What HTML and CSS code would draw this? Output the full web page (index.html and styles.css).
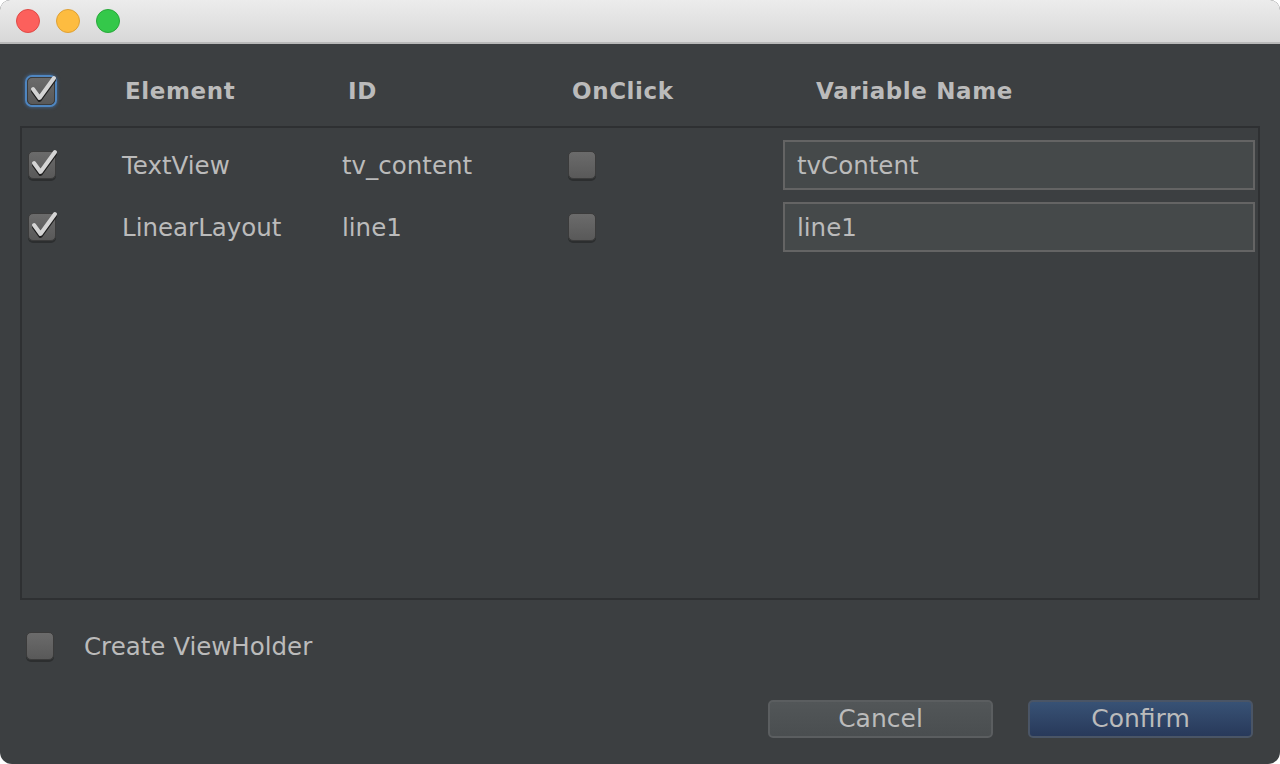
FILE: index.html
```html
<!DOCTYPE html>
<html>
<head>
<meta charset="utf-8">
<link rel="stylesheet" href="styles.css">
</head>
<body>
<div class="window">
  <div class="titlebar">
    <span class="light red"></span>
    <span class="light yellow"></span>
    <span class="light green"></span>
  </div>
  <div class="content">
    <div class="header">
      <span class="cb checked focus"><svg class="tick" viewBox="0 0 28 28"><path class="tick-shadow" d="M6 14 L12.5 23 L27 3"/><path class="tick-mark" d="M6 12 L12.5 21 L27 1"/></svg></span>
      <span class="hcell">Element</span>
      <span class="hcell">ID</span>
      <span class="hcell">OnClick</span>
      <span class="hcell">Variable Name</span>
    </div>
    <div class="table">
      <div class="row">
        <span class="cb checked"><svg class="tick" viewBox="0 0 28 28"><path class="tick-shadow" d="M6 14 L12.5 23 L27 3"/><path class="tick-mark" d="M6 12 L12.5 21 L27 1"/></svg></span>
        <span class="cell">TextView</span>
        <span class="cell">tv_content</span>
        <span class="cb"></span>
        <span class="field">tvContent</span>
      </div>
      <div class="row">
        <span class="cb checked"><svg class="tick" viewBox="0 0 28 28"><path class="tick-shadow" d="M6 14 L12.5 23 L27 3"/><path class="tick-mark" d="M6 12 L12.5 21 L27 1"/></svg></span>
        <span class="cell">LinearLayout</span>
        <span class="cell">line1</span>
        <span class="cb"></span>
        <span class="field">line1</span>
      </div>
    </div>
    <div class="option">
      <span class="cb"></span>
      <span class="option-label">Create ViewHolder</span>
    </div>
    <div class="buttons">
      <button class="btn cancel">Cancel</button>
      <button class="btn confirm">Confirm</button>
    </div>
  </div>
</div>
</body>
</html>
```

FILE: styles.css
```css
html, body {
  margin: 0;
  padding: 0;
  background: #ffffff;
}
body {
  width: 1280px;
  height: 764px;
  overflow: hidden;
  font-family: "DejaVu Sans", "Liberation Sans", sans-serif;
  color: #bbbbbb;
}
.window {
  width: 1280px;
  height: 764px;
  border-radius: 10px 10px 12px 12px;
  overflow: hidden;
  display: flex;
  flex-direction: column;
  background: #3c3f41;
}
.titlebar {
  flex: none;
  height: 44px;
  box-sizing: border-box;
  background: linear-gradient(#ececec, #d8d8d8);
  border-bottom: 2px solid #b9b9b9;
  display: flex;
  align-items: center;
  padding-left: 16px;
  gap: 16px;
}
.light {
  width: 24px;
  height: 24px;
  border-radius: 50%;
  box-sizing: border-box;
}
.red { background: #fc605c; border: 1px solid #df4a46; }
.yellow { background: #fdbc40; border: 1px solid #dea035; }
.green { background: #34c84a; border: 1px solid #28a83a; }

.content {
  flex: 1;
  display: flex;
  flex-direction: column;
}
.header {
  height: 82px;
  box-sizing: border-box;
  padding: 12px 0 0 27px;
  display: grid;
  grid-template-columns: 98px 223px 224px 244px 1fr;
  align-items: center;
}
.hcell {
  font-weight: bold;
  font-size: 23px;
  letter-spacing: 0.6px;
  color: #bbbbbb;
}
.table {
  margin: 0 20px;
  height: 474px;
  border: 2px solid #2e3032;
  box-sizing: border-box;
  padding: 12px 3px 0 6px;
  display: flex;
  flex-direction: column;
  gap: 12px;
}
.row {
  height: 50px;
  display: grid;
  grid-template-columns: 94px 220px 226px 215px 1fr;
  align-items: center;
}
.cell {
  font-size: 24.5px;
}
.cb {
  position: relative;
  display: block;
  width: 28px;
  height: 28px;
  box-sizing: border-box;
  border-radius: 5px;
  background: linear-gradient(#6b6b6b, #595959);
  border: 1px solid #3b3b3b;
  box-shadow: 0 2px 0 #2c2e2f;
}
.cb.focus {
  box-shadow: 0 0 0 2px #4f86c0, 0 0 3px 3px rgba(70,120,180,0.5);
}
.tick {
  position: absolute;
  left: -1px;
  top: -1px;
  width: 28px;
  height: 28px;
  overflow: visible;
}
.tick path {
  fill: none;
  stroke-width: 4px;
  stroke-linecap: round;
  stroke-linejoin: round;
}
.tick-shadow { stroke: #1e1e1e; }
.tick-mark { stroke: #d4d4d4; }
.field {
  height: 50px;
  box-sizing: border-box;
  border: 2px solid #646464;
  background: #45494a;
  font-size: 24.5px;
  padding-left: 12px;
  display: flex;
  align-items: center;
}
.option {
  display: flex;
  align-items: center;
  padding-left: 26px;
  margin-top: 31px;
  height: 30px;
}
.option-label {
  margin-left: 30px;
  font-size: 24.5px;
}
.buttons {
  margin-top: 39px;
  display: flex;
  justify-content: flex-end;
  gap: 35px;
  padding-right: 27px;
}
.btn {
  width: 225px;
  height: 38px;
  border-radius: 5px;
  font-family: "DejaVu Sans", "Liberation Sans", sans-serif;
  font-size: 25px;
  color: #bbbbbb;
  padding: 0;
  line-height: 34px;
}
.cancel {
  background: linear-gradient(#525658, #4a4e50);
  border: 2px solid #5b5e60;
}
.confirm {
  background: linear-gradient(#385275, #28395a);
  border: 2px solid #4a5566;
}
```
